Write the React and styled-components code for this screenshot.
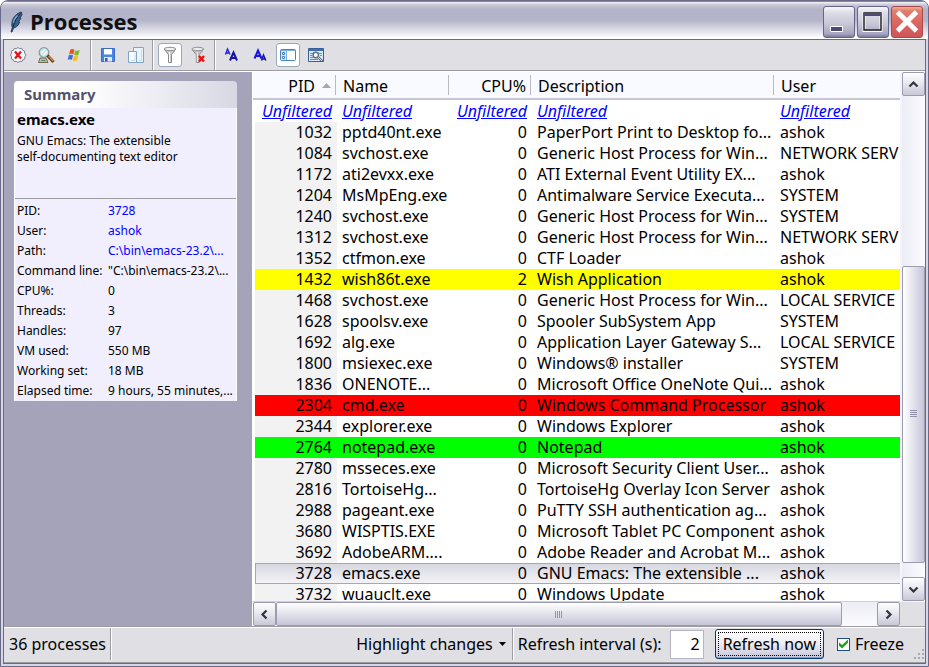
import React from "react";
import styled, { createGlobalStyle, css } from "styled-components";

const GlobalStyle = createGlobalStyle`
  * { box-sizing: border-box; }
  body {
    margin: 0;
    background: #fff;
    color: #000;
    font-family: "Noto Sans", "DejaVu Sans Condensed", sans-serif;
    font-size: 16px;
    line-height: 20px;
  }
  button, input { font: inherit; color: inherit; margin: 0; }
`;

const DARK = "#6b6988";

const Window = styled.div`
  display: flex;
  flex-direction: column;
  height: 100vh;
  padding: 0 2px 2px;
  border: 1px solid ${DARK};
  border-radius: 8px 8px 0 0;
  background: #d6d6e4;
  overflow: hidden;
`;

const TitleBar = styled.header`
  display: flex;
  align-items: center;
  flex: none;
  height: 38px;
  margin: 0 -2px;
  padding: 2px 5px 0 8px;
  border-top: 1px solid #8684a0;
  background: linear-gradient(#f4f4f8 0, #c6c6d6 3px, #b2b2c8 8px, #b4b4ca 18px, #dcdce8 28px, #ffffff 36px);
`;

const Title = styled.h1`
  flex: 1;
  margin: 0 0 0 6px;
  padding-bottom: 2px;
  font-family: "Open Sans", "Noto Sans", sans-serif;
  font-size: 22px;
  line-height: 28px;
  font-weight: 700;
  color: #111;
`;

const CaptionButtons = styled.div`
  display: flex;
  gap: 2px;
`;

const CaptionButton = styled.button`
  display: grid;
  place-items: center;
  width: 32px;
  height: 32px;
  padding: 0;
  border: 1px solid ${(p) => (p.$danger ? "#a8484c" : "#66668c")};
  border-radius: 3px;
  background: ${(p) =>
    p.$danger
      ? "linear-gradient(#f0b08c 0, #e07c70 4px, #d9635f 60%, #cf5558)"
      : "linear-gradient(#f6f6fa 0, #dcdce6 6px, #c4c4d6 60%, #a4a4be 90%, #77779a)"};
`;

const Client = styled.main`
  display: flex;
  flex-direction: column;
  flex: 1;
  min-height: 0;
  border: 1px solid ${DARK};
  background: #e0dfe3;
`;

const Toolbar = styled.div`
  display: flex;
  flex: none;
  height: 31px;
  padding-left: 2px;
  border-bottom: 1px solid #9d9da1;
`;

const ToolGroup = styled.div`
  display: flex;
  align-items: center;
  gap: 4px;
`;

const Separator = styled.div`
  flex: none;
  width: 2px;
  margin: 0 4px;
  border-left: 1px solid #9d9da1;
  border-right: 1px solid #fff;
`;

const ToolButton = styled.button`
  display: grid;
  place-items: center;
  width: 24px;
  height: 24px;
  padding: 0;
  border: 1px solid transparent;
  border-radius: 3px;
  background: none;
  ${(p) =>
    p.$on &&
    css`
      border-color: #9aa8bc;
      background: #fff;
    `}
  svg { display: block; }
`;

const Body = styled.div`
  display: flex;
  flex: 1;
  min-height: 0;
  border-top: 1px solid #fff;
`;

const Sidebar = styled.aside`
  flex: none;
  width: 248px;
  padding: 9px 15px 0 10px;
  background: #a5a3b9;
`;

const CardTitle = styled.h2`
  margin: 0;
  padding: 3px 10px 4px;
  border-radius: 4px 4px 0 0;
  background: linear-gradient(90deg, #fff 30%, #d8d8e4);
  color: #52526e;
  font-size: 15px;
  line-height: 20px;
  font-weight: 700;
`;

const Card = styled.div`
  border: solid #fff;
  border-width: 0 1px;
  background: #f1effd;
  font-size: 12px;
  line-height: 16px;
`;

const CardHead = styled.div`
  height: 91px;
  padding: 1px 50px 0 2px;
  border-bottom: 1px solid #9d9da1;
`;

const ProcessName = styled.h3`
  margin: 0 0 4px;
  font-size: 15px;
  line-height: 20px;
  font-weight: 700;
`;

const Facts = styled.dl`
  display: grid;
  grid-template-columns: 91px minmax(0, 1fr);
  margin: 0;
  padding: 2px 0 0 2px;
  line-height: 20px;
  white-space: nowrap;
  dt, dd { margin: 0; }
  a { color: #00f; text-decoration: none; }
`;

const Listing = styled.section`
  display: grid;
  flex: 1;
  min-width: 0;
  grid-template-columns: minmax(0, 1fr) 25px;
  grid-template-rows: minmax(0, 1fr) 24px;
  border-left: 1px solid #fff;
`;

const TableView = styled.div`
  overflow: hidden;
  border-bottom: 1px solid #d0d0d4;
  background: #fff;
`;

const Table = styled.table`
  width: 100%;
  table-layout: fixed;
  border-spacing: 0;
  border-collapse: separate;
`;

const Col = styled.col`
  width: ${(p) => (p.$w ? p.$w + "px" : "auto")};
`;

const HeadCell = styled.th`
  height: 28px;
  padding: 2px 6px 0;
  border-bottom: 2px solid #c6c5d6;
  background: linear-gradient(#b9b8c8, #b9b8c8) calc(100% - 1px) 3px / 1px 20px no-repeat, #f9faff;
  font-weight: 400;
  text-align: ${(p) => (p.$right ? "right" : "left")};
  &:last-child { background: #f9faff; }
  svg { margin: 0 -1px 4px 5px; }
`;

const FilterCell = styled.td`
  height: 22px;
  padding: 0 5px 1px;
  white-space: nowrap;
  text-align: ${(p) => (p.$right ? "right" : "left")};
  a { color: #00f; font-style: italic; }
`;

const ROW_COLORS = {
  yellow: "#ffff00",
  red: "#ff0000",
  lime: "#00ff00",
  selected: "linear-gradient(#d6d6e0, #f4f4f8)",
};

const Row = styled.tr`
  background: ${(p) => ROW_COLORS[p.$tone] || "none"};
  td:first-child {
    border-left: 2px solid #fff;
    background: ${(p) => (p.$tone ? "none" : "#f2f2f2")};
  }
  ${(p) =>
    p.$tone === "selected" &&
    css`
      td { box-shadow: inset 0 1px 0 #a6a6b8, inset 0 -1px 0 #a6a6b8; }
      td:first-child { box-shadow: inset 1px 1px 0 #a6a6b8, inset 0 -1px 0 #a6a6b8; }
    `}
`;

const Cell = styled.td`
  height: 21px;
  padding: 0 5px 1px;
  overflow: hidden;
  white-space: nowrap;
  text-align: ${(p) => (p.$right ? "right" : "left")};
`;

const VScroll = styled.div`
  display: flex;
  flex-direction: column;
  padding-bottom: 1px;
  border-left: 2px solid #f4f4fa;
  background: linear-gradient(90deg, #ececf4, #fbfbff);
`;

const HScroll = styled.div`
  display: flex;
  background: linear-gradient(#ececf4, #fbfbff);
`;

const ScrollButton = styled.button`
  display: grid;
  place-items: center;
  flex: none;
  width: 23px;
  height: 24px;
  padding: 0;
  border: 1px solid #9c9cb0;
  border-radius: 2px;
  background: linear-gradient(#fff, #e6e6ee 50%, #c8c8d8);
`;

const Track = styled.div`
  flex: ${(p) => p.$size} 1 0;
`;

const Thumb = styled.div`
  display: grid;
  place-items: center;
  flex: ${(p) => p.$size} 1 0;
  border: 1px solid #9c9cb0;
  border-radius: 2px;
  background: linear-gradient(${(p) => (p.$vertical ? "90deg" : "180deg")}, #fff 0, #e8e8f0 40%, #c6c5d8);
`;

const StatusBar = styled.footer`
  display: flex;
  align-items: center;
  flex: none;
  height: 37px;
  padding: 1px 0 2px 5px;
  border-top: 1px solid #9d9da1;
  border-bottom: 1px solid #9d9da1;
  box-shadow: inset 0 1px 0 #fff;
  white-space: nowrap;
`;

const StatusSeparator = styled(Separator)`
  align-self: stretch;
`;

const Spacer = styled.div`
  flex: 1;
`;

const MenuButton = styled.button`
  display: flex;
  align-items: center;
  gap: 6px;
  padding: 0 2px;
  border: 0;
  background: none;
`;

const IntervalInput = styled.input`
  width: 34px;
  height: 29px;
  margin: 0 11px 0 8px;
  padding: 0 3px;
  border: 1px solid #b4b4c4;
  background: #fff;
  text-align: right;
`;

const RefreshButton = styled.button`
  height: 30px;
  padding: 2px;
  border: 1px solid #003c74;
  border-radius: 3px;
  background: linear-gradient(#fff, #ececf4 50%, #c6c5d8);
  box-shadow: inset 0 -1px 0 #9a9ab8;
  span {
    display: block;
    padding: 1px 4px;
    border: 1px dotted #000;
  }
`;

const Check = styled.label`
  display: flex;
  align-items: center;
  gap: 5px;
  margin: 0 0 0 13px;
`;

const CheckBox = styled.input`
  appearance: none;
  width: 13px;
  height: 13px;
  border: 1px solid #1c5180;
  background: #fff;
  &:checked::after {
    content: "";
    display: block;
    width: 9px;
    height: 9px;
    margin: 1px;
    background: #21a121;
    clip-path: polygon(0 30%, 35% 60%, 100% 0, 100% 35%, 35% 100%, 0 70%);
  }
`;

const Grip = styled.svg`
  flex: none;
  align-self: flex-end;
  margin-left: 9px;
`;

function Feather() {
  return (
    <svg width="15" height="22" viewBox="0 0 15 22" aria-hidden="true">
      <path d="M12.500 1C8 2 4 6 3 11c-.4 2-.3 4 .3 5.500L2 21h1l1.500-4c3-.5 5.500-3 6-6L9.500 11 12 7l-1.200 0L13 4z" fill="#38628f" stroke="#1c2c44" strokeWidth=".8" />
      <path d="M11.500 2.500C8 6 5.500 10 4 16.500" stroke="#16243c" strokeWidth="1" fill="none" />
      <path d="M8.500 4.500C6 7 4.500 9.500 4.300 12" stroke="#7fa9d4" strokeWidth="1.200" fill="none" />
    </svg>
  );
}

const Icon = ({ children }) => (
  <svg width="18" height="18" viewBox="0 0 18 18" fill="none" aria-hidden="true">{children}</svg>
);

const icons = {
  kill: (
    <Icon>
      <path d="M9 1.500l1.800 1.200 2-.4.9 1.900 2 .8-.2 2L17 9l-1.200 1.800.2 2-2 .8-1 1.900-2-.2L9 16.500l-1.800-1.200-2 .3-.9-1.900-2-.8.300-2L1.500 9l1-1.900-.2-2 2-.8.900-1.900 2 .3z" fill="#f4f5fa" stroke="#7c829a" />
      <path d="M6 5.500l6 7M12 5.500l-6 7" stroke="#e81010" strokeWidth="2.200" />
    </Icon>
  ),
  find: (
    <Icon>
      <path d="M1.500 16.500l1.500-4.500h6l2 4.500z" fill="#c9b9a6" stroke="#5e5044" strokeWidth=".8" />
      <path d="M4.500 14.500h4" stroke="#4c8a4c" />
      <circle cx="7" cy="6.500" r="4.800" fill="#c4e8ec" stroke="#8a989c" strokeWidth="1.200" />
      <path d="M4.500 7l3.500-3.500M6.500 9l3.500-3.500" stroke="#fff" strokeWidth="1.300" />
      <path d="M10.500 9.500l6 6.500" stroke="#5d3410" strokeWidth="3" />
      <path d="M11.500 10l4.800 5.200" stroke="#d18a42" strokeWidth="1.400" />
    </Icon>
  ),
  windows: (
    <Icon>
      <path d="M5.200 3.800c1.300-1 2.900-1 4.300 0L8.400 8.500c-1.300-.9-2.900-.9-4.300 0z" fill="#e8512a" />
      <path d="M10.200 4.200c1.300.8 2.900.8 4.600-.2l-1.300 4.700c-1.400.9-2.900.9-4.300.1z" fill="#7fb92b" />
      <path d="M3.800 9.300c1.400-.9 2.900-.9 4.300 0L6.900 14c-1.400-.9-2.900-.9-4.300 0z" fill="#3f6fd8" />
      <path d="M9 9.700c1.400.8 2.900.8 4.300-.1l-1.200 4.700c-1.400.9-2.900.9-4.300.1z" fill="#f3c11c" />
    </Icon>
  ),
  save: (
    <Icon>
      <path d="M2.500 2.500h13v13h-13z" fill="#4c86e4" stroke="#3a6cc8" />
      <path d="M5 3h8v6H5z" fill="#fff" />
      <path d="M5 8.500h8" stroke="#9dbcf0" />
      <path d="M5 11h8v4.500H5z" fill="#dfeafc" />
      <path d="M6 12h2.500v3.500H6z" fill="#2b5cc0" />
    </Icon>
  ),
  copy: (
    <Icon>
      <path d="M6.500 1.500h10v15h-10z" fill="#eaf4fc" stroke="#7fa4c4" />
      <path d="M1.500 5.500h8v11h-8z" fill="#f6fbff" stroke="#7fa4c4" />
      <path d="M3.500 14.500h4.500v-7" stroke="#c4dcee" />
      <path d="M12 14.500h2.500v-11" stroke="#c4dcee" />
    </Icon>
  ),
  filter: (
    <Icon>
      <path d="M3.500 3.500l4 5.200v7.800h3V8.700l4-5.200z" fill="#cdcdcd" stroke="#8a8a8a" />
      <ellipse cx="9" cy="3" rx="5.800" ry="1.700" fill="#f2f2f2" stroke="#8a8a8a" />
      <path d="M8.500 6v10" stroke="#fff" />
    </Icon>
  ),
  unfilter: (
    <Icon>
      <path d="M3 3.500l4.300 5.200v7.800h3V8.700L14.500 3.500z" fill="#c2c2c2" stroke="#8f8f8f" />
      <ellipse cx="8.800" cy="3" rx="5.800" ry="1.700" fill="#ececec" stroke="#8f8f8f" />
      <path d="M8.300 6v10" stroke="#eee" />
      <path d="M10 10l5 5.500M15 10l-5 5.500" stroke="#f01010" strokeWidth="2.400" />
    </Icon>
  ),
  fontUp: (
    <Icon>
      <path d="M2.500 8.500l2-5.500L7 8.500M3.300 7h2.700" stroke="#2020f0" strokeWidth="1.400" />
      <path d="M7 14.500l3.500-8L14 14.500M8.300 12h4.500" stroke="#1414a0" strokeWidth="2" />
    </Icon>
  ),
  fontDown: (
    <Icon>
      <path d="M3.500 12.500l3.500-8 3.500 8M4.800 10h4.500" stroke="#1414f0" strokeWidth="2" />
      <path d="M10.500 14.500l2-5.500 2.300 5.500M11.200 13h2.800" stroke="#1414a0" strokeWidth="1.500" />
    </Icon>
  ),
  panel: (
    <Icon>
      <rect x="1.500" y="3.500" width="15" height="11" rx="1" fill="#fff" stroke="#4a80be" />
      <path d="M2 4.500h14" stroke="#7eb0e4" />
      <path d="M2 5h5.500v9H2z" fill="#d4e6f8" />
      <path d="M7.500 5v9" stroke="#7eb0e4" />
      <path d="M3.500 6.500h2v2h-2zM3.500 10.500h2v2h-2z" fill="#fff" stroke="#4a80be" />
    </Icon>
  ),
  options: (
    <Icon>
      <path d="M1.500 2.500h15v13h-15z" fill="#dce8f4" stroke="#3a5f94" />
      <path d="M2 4h14" stroke="#3a6fb8" strokeWidth="2" />
      <path d="M3 7.500h3M3 9.500h2M3 11.500h3M12 7.500h3M13 9.500h2M3 13.500h8" stroke="#6f8fb8" />
      <circle cx="8.800" cy="9" r="2.700" fill="#fff" stroke="#5b6e88" strokeWidth="1.400" />
      <path d="M11 11l4.500 4.500" stroke="#4f5f78" strokeWidth="2.400" />
      <path d="M11 11l4 4" stroke="#dfe6ee" />
    </Icon>
  ),
};

const Chevron = ({ d }) => (
  <svg width="11" height="11" viewBox="0 0 11 11" aria-hidden="true">
    <path d={d} fill="none" stroke="#33333d" strokeWidth="2.200" />
  </svg>
);

const toolGroups = [
  [["kill", "End process"], ["find", "Find process"], ["windows", "Show window"]],
  [["save", "Save"], ["copy", "Copy"]],
  [["filter", "Filter", true], ["unfilter", "Clear filter"]],
  [["fontUp", "Larger font"], ["fontDown", "Smaller font"], ["panel", "Summary panel", true], ["options", "Options"]],
];

const facts = [
  ["PID:", "3728", true],
  ["User:", "ashok", true],
  ["Path:", "C:\\bin\\emacs-23.2\\...", true],
  ["Command line:", "\"C:\\bin\\emacs-23.2\\..."],
  ["CPU%:", "0"],
  ["Threads:", "3"],
  ["Handles:", "97"],
  ["VM used:", "550 MB"],
  ["Working set:", "18 MB"],
  ["Elapsed time:", "9 hours, 55 minutes,..."],
];

const columns = [
  { name: "PID", w: 84, right: true, sorted: true },
  { name: "Name", w: 113 },
  { name: "CPU%", w: 82, right: true },
  { name: "Description", w: 243 },
  { name: "User" },
];

const rows = [
  ["1032", "pptd40nt.exe", "0", "PaperPort Print to Desktop fo...", "ashok"],
  ["1084", "svchost.exe", "0", "Generic Host Process for Win...", "NETWORK SERV"],
  ["1172", "ati2evxx.exe", "0", "ATI External Event Utility EX...", "ashok"],
  ["1204", "MsMpEng.exe", "0", "Antimalware Service Executa...", "SYSTEM"],
  ["1240", "svchost.exe", "0", "Generic Host Process for Win...", "SYSTEM"],
  ["1312", "svchost.exe", "0", "Generic Host Process for Win...", "NETWORK SERV"],
  ["1352", "ctfmon.exe", "0", "CTF Loader", "ashok"],
  ["1432", "wish86t.exe", "2", "Wish Application", "ashok", "yellow"],
  ["1468", "svchost.exe", "0", "Generic Host Process for Win...", "LOCAL SERVICE"],
  ["1628", "spoolsv.exe", "0", "Spooler SubSystem App", "SYSTEM"],
  ["1692", "alg.exe", "0", "Application Layer Gateway S...", "LOCAL SERVICE"],
  ["1800", "msiexec.exe", "0", "Windows® installer", "SYSTEM"],
  ["1836", "ONENOTE...", "0", "Microsoft Office OneNote Qui...", "ashok"],
  ["2304", "cmd.exe", "0", "Windows Command Processor", "ashok", "red"],
  ["2344", "explorer.exe", "0", "Windows Explorer", "ashok"],
  ["2764", "notepad.exe", "0", "Notepad", "ashok", "lime"],
  ["2780", "msseces.exe", "0", "Microsoft Security Client User...", "ashok"],
  ["2816", "TortoiseHg...", "0", "TortoiseHg Overlay Icon Server", "ashok"],
  ["2988", "pageant.exe", "0", "PuTTY SSH authentication ag...", "ashok"],
  ["3680", "WISPTIS.EXE", "0", "Microsoft Tablet PC Component", "ashok"],
  ["3692", "AdobeARM....", "0", "Adobe Reader and Acrobat M...", "ashok"],
  ["3728", "emacs.exe", "0", "GNU Emacs: The extensible ...", "ashok", "selected"],
  ["3732", "wuauclt.exe", "0", "Windows Update", "ashok"],
];

function ProcessTable() {
  return (
    <TableView>
      <Table>
        <colgroup>
          {columns.map((c) => <Col key={c.name} $w={c.w} />)}
        </colgroup>
        <thead>
          <tr>
            {columns.map((c) => (
              <HeadCell key={c.name} scope="col" $right={c.right}>
                {c.name}
                {c.sorted && (
                  <svg width="12" height="5" viewBox="0 0 12 5" aria-hidden="true">
                    <path d="M2 5l4.500-5L11 5z" fill="#aca899" />
                  </svg>
                )}
              </HeadCell>
            ))}
          </tr>
        </thead>
        <tbody>
          <tr>
            {columns.map((c) => (
              <FilterCell key={c.name} $right={c.right}>
                <a href="#filter">Unfiltered</a>
              </FilterCell>
            ))}
          </tr>
          {rows.map(([pid, name, cpu, desc, user, tone]) => (
            <Row key={pid} $tone={tone}>
              <Cell $right>{pid}</Cell>
              <Cell>{name}</Cell>
              <Cell $right>{cpu}</Cell>
              <Cell>{desc}</Cell>
              <Cell>{user}</Cell>
            </Row>
          ))}
        </tbody>
      </Table>
    </TableView>
  );
}

export default function App() {
  return (
    <>
      <GlobalStyle />
      <Window>
        <TitleBar>
          <Feather />
          <Title>Processes</Title>
          <CaptionButtons>
            <CaptionButton aria-label="Minimize">
              <svg width="30" height="30" viewBox="0 0 30 30">
                <path d="M6.500 19.500h12v5h-12z" fill="#4c4a78" stroke="#fff" />
              </svg>
            </CaptionButton>
            <CaptionButton aria-label="Maximize">
              <svg width="30" height="30" viewBox="0 0 30 30">
                <path d="M6 6.500h17v17H6z" fill="none" stroke="#fff" strokeWidth="3" />
                <path d="M6 6h17v17H6z" fill="none" stroke="#111" strokeWidth="1.400" />
                <path d="M6 7.500h17" stroke="#4c4a78" strokeWidth="3" />
              </svg>
            </CaptionButton>
            <CaptionButton $danger aria-label="Close">
              <svg width="30" height="30" viewBox="0 0 30 30">
                <path d="M5.500 5l19 19M24.500 5l-19 19" stroke="#fff" strokeWidth="5" />
              </svg>
            </CaptionButton>
          </CaptionButtons>
        </TitleBar>
        <Client>
          <Toolbar role="toolbar">
            {toolGroups.map((group, i) => (
              <React.Fragment key={i}>
                {i > 0 && <Separator />}
                <ToolGroup>
                  {group.map(([icon, label, on]) => (
                    <ToolButton key={icon} aria-label={label} $on={on}>{icons[icon]}</ToolButton>
                  ))}
                </ToolGroup>
              </React.Fragment>
            ))}
          </Toolbar>
          <Body>
            <Sidebar>
              <CardTitle>Summary</CardTitle>
              <Card>
                <CardHead>
                  <ProcessName>emacs.exe</ProcessName>
                  GNU Emacs: The extensible self-documenting text editor
                </CardHead>
                <Facts>
                  {facts.map(([label, value, link]) => (
                    <React.Fragment key={label}>
                      <dt>{label}</dt>
                      <dd>{link ? <a href="#details">{value}</a> : value}</dd>
                    </React.Fragment>
                  ))}
                </Facts>
              </Card>
            </Sidebar>
            <Listing>
              <ProcessTable />
              <VScroll>
                <ScrollButton aria-label="Scroll up"><Chevron d="M1.500 7.500l4-4 4 4" /></ScrollButton>
                <Track $size={171} />
                <Thumb $size={298} $vertical>
                  <svg width="7" height="8" viewBox="0 0 7 8" aria-hidden="true">
                    <path d="M0 .5h7M0 2.500h7M0 4.500h7M0 6.500h7" stroke="#9292ac" />
                  </svg>
                </Thumb>
                <Track $size={14} />
                <ScrollButton aria-label="Scroll down"><Chevron d="M1.500 3.500l4 4 4-4" /></ScrollButton>
              </VScroll>
              <HScroll>
                <ScrollButton aria-label="Scroll left"><Chevron d="M7.500 1.500l-4 4 4 4" /></ScrollButton>
                <Thumb $size={567}>
                  <svg width="8" height="7" viewBox="0 0 8 7" aria-hidden="true">
                    <path d="M.5 0v7M2.500 0v7M4.500 0v7M6.500 0v7" stroke="#9292ac" />
                  </svg>
                </Thumb>
                <Track $size={35} />
                <ScrollButton aria-label="Scroll right"><Chevron d="M3.500 1.500l4 4-4 4" /></ScrollButton>
              </HScroll>
            </Listing>
          </Body>
          <StatusBar>
            <span>36 processes</span>
            <StatusSeparator />
            <Spacer />
            <MenuButton aria-haspopup="menu">
              Highlight changes
              <svg width="7" height="4" viewBox="0 0 7 4" aria-hidden="true"><path d="M0 0h7L3.500 4z" fill="#000" /></svg>
            </MenuButton>
            <StatusSeparator />
            <label htmlFor="interval">Refresh interval (s):</label>
            <IntervalInput id="interval" defaultValue="2" />
            <RefreshButton><span>Refresh now</span></RefreshButton>
            <Check>
              <CheckBox type="checkbox" defaultChecked />
              Freeze
            </Check>
            <Grip width="12" height="12" viewBox="0 0 12 12" aria-hidden="true">
              <path d="M1 10h2M5 10h2M9 10h2M5 6h2M9 6h2M9 2h2" stroke="#a8a8b0" strokeWidth="2" />
            </Grip>
          </StatusBar>
        </Client>
      </Window>
    </>
  );
}
